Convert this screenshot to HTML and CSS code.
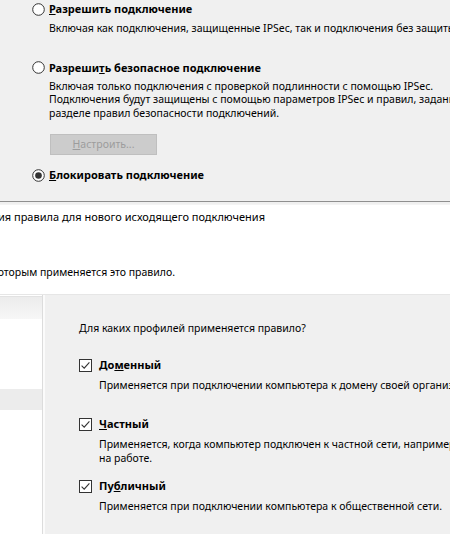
FILE: index.html
```html
<!DOCTYPE html>
<html lang="ru">
<head>
<meta charset="utf-8">
<link rel="stylesheet" href="styles.css">
</head>
<body>
<div class="page">
  <section class="action">
    <div class="opt opt-first">
      <div class="row">
        <svg class="radio" width="13" height="13" viewBox="0 0 13 13"><circle cx="6.5" cy="6.5" r="5.8" fill="#fff" stroke="#333" stroke-width="1"/></svg>
        <span class="label"><u>Р</u>азрешить подключение</span>
      </div>
      <div class="desc">Включая как подключения, защищенные IPSec, так и подключения без защиты.</div>
    </div>
    <div class="opt opt-second">
      <div class="row">
        <svg class="radio" width="13" height="13" viewBox="0 0 13 13"><circle cx="6.5" cy="6.5" r="5.8" fill="#fff" stroke="#333" stroke-width="1"/></svg>
        <span class="label">Разреши<u>т</u>ь безопасное подключение</span>
      </div>
      <div class="desc">Включая только подключения с проверкой подлинности с помощью IPSec.<br>Подключения будут защищены с помощью параметров IPSec и правил, заданных в<br>разделе правил безопасности подключений.</div>
      <div class="btn"><u>Н</u>астроить...</div>
    </div>
    <div class="opt opt-third">
      <div class="row">
        <svg class="radio" width="13" height="13" viewBox="0 0 13 13"><circle cx="6.5" cy="6.5" r="5.8" fill="#fff" stroke="#333" stroke-width="1"/><circle cx="6.5" cy="6.5" r="3.3" fill="#333"/></svg>
        <span class="label"><u>Б</u>локировать подключение</span>
      </div>
    </div>
  </section>
  <div class="sep"></div>
  <section class="wizard-head">
    <div class="title"><span>Мастер создания правила для нового исходящего подключения</span></div>
    <div class="subtitle"><span>Укажите профили, к которым применяется это правило.</span></div>
  </section>
  <section class="wizard-body">
    <nav class="steps">
      <div class="step step-top"></div>
      <div class="step-gap"></div>
      <div class="step step-active"></div>
    </nav>
    <div class="content">
      <div class="question">Для каких профилей применяется правило?</div>
      <div class="profile profile-1">
        <div class="row">
          <svg class="check" width="13" height="13" viewBox="0 0 13 13"><rect x="0.5" y="0.5" width="12" height="12" fill="#fff" stroke="#333"/><path d="M2.6 6.6 L5.2 9.2 L10.4 3.4" fill="none" stroke="#333" stroke-width="1.1"/></svg>
          <span class="label">До<u>м</u>енный</span>
        </div>
        <div class="pdesc">Применяется при подключении компьютера к домену своей организации.</div>
      </div>
      <div class="profile profile-2">
        <div class="row">
          <svg class="check" width="13" height="13" viewBox="0 0 13 13"><rect x="0.5" y="0.5" width="12" height="12" fill="#fff" stroke="#333"/><path d="M2.6 6.6 L5.2 9.2 L10.4 3.4" fill="none" stroke="#333" stroke-width="1.1"/></svg>
          <span class="label"><u>Ч</u>астный</span>
        </div>
        <div class="pdesc">Применяется, когда компьютер подключен к частной сети, например, дома или<br>на работе.</div>
      </div>
      <div class="profile profile-3">
        <div class="row">
          <svg class="check" width="13" height="13" viewBox="0 0 13 13"><rect x="0.5" y="0.5" width="12" height="12" fill="#fff" stroke="#333"/><path d="M2.6 6.6 L5.2 9.2 L10.4 3.4" fill="none" stroke="#333" stroke-width="1.1"/></svg>
          <span class="label">Пу<u>б</u>личный</span>
        </div>
        <div class="pdesc">Применяется при подключении компьютера к общественной сети.</div>
      </div>
    </div>
  </section>
</div>
</body>
</html>
```
FILE: styles.css
```css
* { box-sizing: border-box; }
html, body { margin: 0; padding: 0; }
body {
  width: 450px;
  height: 534px;
  overflow: hidden;
  background: #f0f0f0;
  font-family: "Noto Sans", "Open Sans", sans-serif;
  font-size: 10.5px;
  color: #000;
}
.page { width: 450px; height: 534px; overflow: hidden; display: flex; flex-direction: column; }

.action {
  height: 201px;
  padding: 2px 0 0 32px;
  white-space: nowrap;
}
.row { display: flex; align-items: center; height: 14px; white-space: nowrap; }
.radio { flex: none; margin-right: 4px; }
.check { flex: none; margin-right: 7px; }
.label { font-weight: 700; font-size: 11px; line-height: 14px; }
.label u { text-underline-offset: 1px; }
.desc { margin: 6px 0 0 17px; line-height: 13.5px; }
.opt-second { margin-top: 25px; }
.opt-second .desc { margin-top: 5px; }
.opt-third { margin-top: 13px; }
.btn {
  margin: 14px 0 0 18px;
  width: 107px;
  height: 21px;
  background: #cccccc;
  border: 1px solid #bfbfbf;
  color: #9c9c9c;
  text-align: center;
  line-height: 19px;
}

.sep { height: 1px; background: #8f8f8f; flex: none; }

.wizard-head {
  margin-top: 2px;
  background: #fff;
  height: 91px;
  padding-top: 5px;
  border-top: 1px solid #f4f4f4;
  border-bottom: 1px solid #e6e6e6;
  white-space: nowrap;
  overflow: hidden;
  flex: none;
}
.title, .subtitle {
  line-height: 14px;
  display: flex;
  justify-content: flex-end;
  overflow: hidden;
}
.title span, .subtitle span { flex: none; }
.title { width: 265px; font-size: 11px; }
.subtitle { width: 175px; margin-top: 41px; }

.wizard-body { flex: 1; display: flex; min-height: 0; }
.steps {
  width: 43px;
  background: #fff;
  border-right: 1px solid #dcdcdc;
  flex: none;
  display: flex;
  flex-direction: column;
  padding-top: 1px;
}
.step-top {
  height: 23px;
  background: linear-gradient(#ececec, #f7f7f7);
  border-top: 1px solid #e2e2e2;
}
.step-gap { height: 70px; }
.step-active { height: 21px; background: #ececec; }

.content {
  flex: 1;
  border-left: 2px solid #fbfbfb;
  background: #f0f0f0;
  padding: 26px 0 0 34px;
  white-space: nowrap;
}
.question { line-height: 14px; }
.profile { height: 60px; }
.profile-1 { margin-top: 23px; height: 59px; }
.profile-2 { height: 62px; }
.pdesc { margin: 6px 0 0 20px; line-height: 14px; }
```
